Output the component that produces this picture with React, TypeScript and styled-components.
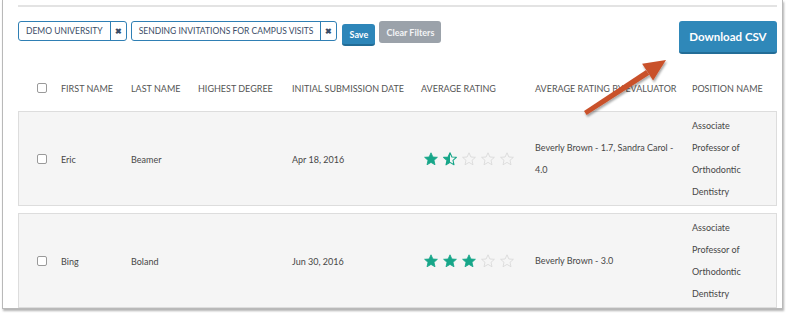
import React from 'react';
import styled, { createGlobalStyle } from 'styled-components';

const GlobalStyle = createGlobalStyle`
  html, body {
    margin: 0;
    padding: 0;
    background: #ffffff;
  }
  body {
    font-family: Lato, 'Open Sans', 'Liberation Sans', sans-serif;
    color: #4a4a4a;
  }
`;

type Candidate = {
  first: string;
  last: string;
  degree: string;
  submitted: string;
  rating: number;
  byEvaluator: string;
  position: string;
};

const candidates: Candidate[] = [
  {
    first: 'Eric',
    last: 'Beamer',
    degree: '',
    submitted: 'Apr 18, 2016',
    rating: 1.5,
    byEvaluator: 'Beverly Brown - 1.7, Sandra Carol - 4.0',
    position: 'Associate Professor of Orthodontic Dentistry',
  },
  {
    first: 'Bing',
    last: 'Boland',
    degree: '',
    submitted: 'Jun 30, 2016',
    rating: 3,
    byEvaluator: 'Beverly Brown - 3.0',
    position: 'Associate Professor of Orthodontic Dentistry',
  },
];

const columns = [
  'First Name',
  'Last Name',
  'Highest Degree',
  'Initial Submission Date',
  'Average Rating',
  'Average Rating by Evaluator',
  'Position Name',
];

const STAR = '7,0.8 8.9,5 13.4,5.3 10,8.3 11,12.8 7,10.4 3,12.8 4,8.3 0.6,5.3 5.1,5';

function Star({ fill }: { fill: 'full' | 'half' | 'empty' }) {
  return (
    <StarSvg viewBox="0 0 14 14">
      {fill === 'full' && <polygon points={STAR} fill="#17a689" stroke="#17a689" strokeWidth="0.8" strokeLinejoin="round" />}
      {fill === 'empty' && <polygon points={STAR} fill="none" stroke="#dadada" strokeWidth="0.9" strokeLinejoin="round" />}
      {fill === 'half' && (
        <>
          <clipPath id="leftHalf">
            <rect x="0" y="0" width="7" height="14" />
          </clipPath>
          <polygon points={STAR} fill="none" stroke="#17a689" strokeWidth="1.1" strokeLinejoin="round" />
          <polygon points={STAR} fill="#17a689" clipPath="url(#leftHalf)" />
        </>
      )}
    </StarSvg>
  );
}

function Rating({ value }: { value: number }) {
  const stars = [1, 2, 3, 4, 5].map((i) => {
    if (value >= i) return 'full' as const;
    if (value >= i - 0.5) return 'half' as const;
    return 'empty' as const;
  });
  return (
    <Stars>
      {stars.map((s, i) => (
        <Star key={i} fill={s} />
      ))}
    </Stars>
  );
}

export default function App() {
  return (
    <Page>
      <GlobalStyle />
      <Frame>
        <TopRule />
        <Toolbar>
          <Filters>
            <Chip>
              <ChipLabel>Demo University</ChipLabel>
              <ChipRemove>✖</ChipRemove>
            </Chip>
            <Chip>
              <ChipLabel>Sending Invitations for Campus Visits</ChipLabel>
              <ChipRemove>✖</ChipRemove>
            </Chip>
            <SaveButton>Save</SaveButton>
            <ClearButton>Clear Filters</ClearButton>
          </Filters>
          <DownloadButton>Download CSV</DownloadButton>
        </Toolbar>

        <HeaderRow>
          <Checkbox />
          {columns.map((c) => (
            <HeaderCell key={c}>{c}</HeaderCell>
          ))}
        </HeaderRow>

        <Rows>
          {candidates.map((c) => (
            <Row key={c.first}>
              <Checkbox />
              <Cell>{c.first}</Cell>
              <Cell>{c.last}</Cell>
              <Cell>{c.degree}</Cell>
              <Cell>{c.submitted}</Cell>
              <Cell>
                <Rating value={c.rating} />
              </Cell>
              <WrapCell $width={142}>{c.byEvaluator}</WrapCell>
              <WrapCell $width={66}>{c.position}</WrapCell>
            </Row>
          ))}
        </Rows>
      </Frame>

      <Arrow viewBox="0 0 787 313">
        <defs>
          <filter id="arrowShadow" x="-20%" y="-20%" width="140%" height="140%">
            <feDropShadow dx="1" dy="2" stdDeviation="1.2" floodColor="#000" floodOpacity="0.35" />
          </filter>
        </defs>
        <g filter="url(#arrowShadow)" fill="#c9512b">
          <polygon points="584,111 586.6,115 649.3,74.8 646,69.9" />
          <polygon points="666,60 642.1,63.7 653.1,80.5" />
        </g>
      </Arrow>
    </Page>
  );
}

const Page = styled.div`
  position: relative;
  width: 787px;
  height: 313px;
  overflow: hidden;
`;

const Frame = styled.div`
  box-sizing: border-box;
  margin-left: 2px;
  width: 781px;
  height: 309px;
  padding: 0 5px 0 15px;
  background: #ffffff;
  border: 1px solid #b9b9b9;
  border-top: none;
  box-shadow: 1px 2px 2px rgba(0, 0, 0, 0.3);
  overflow: hidden;
`;

const TopRule = styled.div`
  height: 2px;
  margin-top: 5px;
  background: #e3e3e3;
`;

const Toolbar = styled.div`
  display: flex;
  justify-content: space-between;
  align-items: flex-start;
  margin-top: 14px;
`;

const Filters = styled.div`
  display: flex;
  align-items: flex-start;
  gap: 4px;
`;

const Chip = styled.div`
  box-sizing: border-box;
  display: flex;
  height: 20px;
  border: 1px solid #2f7fb4;
  border-radius: 3px;
  color: #3a4c66;
  font-size: 8.5px;
  text-transform: uppercase;
`;

const ChipLabel = styled.span`
  display: flex;
  align-items: center;
  padding: 0 7px 0 7px;
`;

const ChipRemove = styled.span`
  display: flex;
  align-items: center;
  justify-content: center;
  width: 15px;
  border-left: 1px solid #2f7fb4;
  font-size: 7.5px;
  font-weight: 700;
  color: #3a4c66;
`;

const Button = styled.button`
  box-sizing: border-box;
  border: none;
  border-radius: 3px;
  color: #ffffff;
  font-family: Lato, 'Liberation Sans', sans-serif;
  font-weight: 700;
  padding: 0;
  cursor: pointer;
`;

const SaveButton = styled(Button)`
  margin-top: 3px;
  margin-left: 1px;
  width: 33px;
  height: 22px;
  font-size: 9px;
  background: #2d86b9;
  border-bottom: 2px solid #226c96;
`;

const ClearButton = styled(Button)`
  width: 62px;
  height: 22px;
  font-size: 9px;
  background: #9ba2aa;
  color: #f3f4f6;
`;

const DownloadButton = styled(Button)`
  width: 98px;
  height: 33px;
  font-size: 11.5px;
  background: #2f88b9;
  border-bottom: 2px solid #236d97;
`;

const gridColumns = '24px 70px 67px 94px 129px 114px 157px 90px';

const HeaderRow = styled.div`
  box-sizing: border-box;
  display: grid;
  grid-template-columns: ${gridColumns};
  align-items: center;
  height: 28px;
  margin-top: 20px;
  padding-left: 18px;
  border: 1px solid transparent;
`;

const HeaderCell = styled.div`
  font-size: 9px;
  color: #555555;
  text-transform: uppercase;
  white-space: nowrap;
`;

const Checkbox = styled.span`
  box-sizing: border-box;
  width: 10px;
  height: 10px;
  border: 1px solid #9a9a9a;
  border-radius: 2px;
  background: #ffffff;
`;

const Rows = styled.div`
  display: flex;
  flex-direction: column;
  gap: 7px;
  margin-top: 9px;
`;

const Row = styled.div`
  box-sizing: border-box;
  display: grid;
  grid-template-columns: ${gridColumns};
  align-items: center;
  min-height: 95px;
  padding: 3px 0 2px 18px;
  background: #f5f5f5;
  border: 1px solid #dddddd;
`;

const Cell = styled.div`
  font-size: 9px;
  color: #474747;
  white-space: nowrap;
`;

const WrapCell = styled.div<{ $width: number }>`
  width: ${(p) => p.$width}px;
  font-size: 9px;
  line-height: 22px;
  color: #474747;
`;

const Stars = styled.div`
  display: flex;
  gap: 5px;
  padding-left: 3px;
`;

const StarSvg = styled.svg`
  width: 14px;
  height: 14px;
  display: block;
`;

const Arrow = styled.svg`
  position: absolute;
  left: 0;
  top: 0;
  width: 787px;
  height: 313px;
  pointer-events: none;
`;
